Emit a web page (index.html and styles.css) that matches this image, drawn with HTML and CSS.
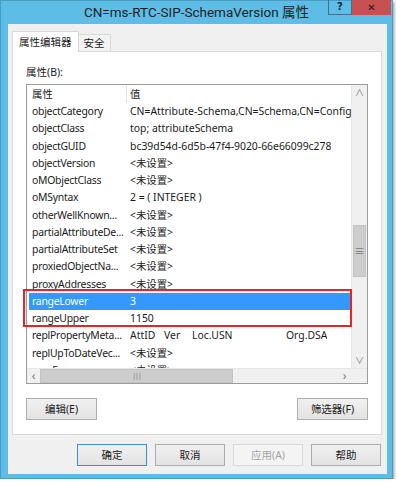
FILE: index.html
```html
<!DOCTYPE html>
<html>
<head>
<meta charset="utf-8">
<title>CN=ms-RTC-SIP-SchemaVersion 属性</title>
<link rel="stylesheet" href="styles.css">
</head>
<body>
<div class="window">
  <div class="titlebar">
    <span class="title">CN=ms-RTC-SIP-SchemaVersion 属性</span>
    <div class="capbtns"><span class="cap-help">?</span><span class="cap-close">&#x2715;</span></div>
  </div>

  <div class="client">
    <div class="tabs">
      <span class="tab active">属性编辑器</span><span class="tab">安全</span>
    </div>

    <div class="panel">
      <div class="label">属性(B):</div>

      <div class="listview">
        <div class="lv-main">
          <div class="lv-body">
            <div class="lv-head"><span class="c1">属性</span><span class="c2">值</span></div>
            <div class="row"><span class="c1">objectCategory</span><span class="c2">CN=Attribute-Schema,CN=Schema,CN=Configuration,DC=contoso,DC=com</span></div>
            <div class="row"><span class="c1">objectClass</span><span class="c2">top; attributeSchema</span></div>
            <div class="row"><span class="c1">objectGUID</span><span class="c2">bc39d54d-6d5b-47f4-9020-66e66099c278</span></div>
            <div class="row"><span class="c1">objectVersion</span><span class="c2">&lt;未设置&gt;</span></div>
            <div class="row"><span class="c1">oMObjectClass</span><span class="c2">&lt;未设置&gt;</span></div>
            <div class="row"><span class="c1">oMSyntax</span><span class="c2">2 = ( INTEGER )</span></div>
            <div class="row"><span class="c1">otherWellKnown...</span><span class="c2">&lt;未设置&gt;</span></div>
            <div class="row"><span class="c1">partialAttributeDe...</span><span class="c2">&lt;未设置&gt;</span></div>
            <div class="row"><span class="c1">partialAttributeSet</span><span class="c2">&lt;未设置&gt;</span></div>
            <div class="row"><span class="c1">proxiedObjectNa...</span><span class="c2">&lt;未设置&gt;</span></div>
            <div class="row"><span class="c1">proxyAddresses</span><span class="c2">&lt;未设置&gt;</span></div>
            <div class="row selected"><span class="c1">rangeLower</span><span class="c2">3</span></div>
            <div class="row"><span class="c1">rangeUpper</span><span class="c2">1150</span></div>
            <div class="row"><span class="c1">replPropertyMeta...</span><span class="c2"><span class="t1">AttID</span><span class="t2">Ver</span><span class="t3">Loc.USN</span><span>Org.DSA</span></span></div>
            <div class="row"><span class="c1">replUpToDateVec...</span><span class="c2">&lt;未设置&gt;</span></div>
            <div class="row"><span class="c1">repsFrom</span><span class="c2">&lt;未设置&gt;</span></div>
          </div>
          <div class="vscroll">
            <span class="arrow">&#x2227;</span>
            <div class="vtrack"><div class="vthumb">&#x2261;</div></div>
            <span class="arrow">&#x2228;</span>
          </div>
        </div>
        <div class="hscroll">
          <span class="arrow">&lsaquo;</span>
          <div class="htrack"><div class="hthumb">|||</div></div>
          <span class="arrow">&rsaquo;</span>
          <span class="corner"></span>
        </div>
        <div class="callout"></div>
      </div>

      <div class="panel-btns">
        <span class="btn">编辑(E)</span>
        <span class="btn">筛选器(F)</span>
      </div>
    </div>

    <div class="dialog-btns">
      <span class="btn default">确定</span>
      <span class="btn">取消</span>
      <span class="btn disabled">应用(A)</span>
      <span class="btn">帮助</span>
    </div>
  </div>
</div>
</body>
</html>
```

FILE: styles.css
```css
body { margin: 0; background: #fff; font-family: "Noto Sans", "Noto Sans CJK SC", sans-serif; font-size: 10.4px; color: #1a1a1a; }

.window { width: 393px; height: 479px; box-sizing: border-box; background: #5ebde6; border: 1px solid #4a9cc2; box-shadow: 1px 2px 3px rgba(0,0,0,0.45); display: flex; flex-direction: column; }

/* title bar */
.titlebar { height: 23px; display: flex; }
.title { flex: 1; padding-left: 64px; text-align: center; font-family: Roboto, "Noto Sans CJK SC", sans-serif; font-size: 13.5px; line-height: 23px; color: #1e1e1e; white-space: nowrap; }
.capbtns { display: flex; margin: -1px 1px 0 0; height: 15px; }
.cap-help { width: 24px; border: 1px solid #3c6f88; border-top: none; box-sizing: border-box; text-align: center; font: bold 10px/14px "DejaVu Sans", sans-serif; color: #14213a; }
.cap-close { width: 39px; background: #c75050; text-align: center; font: bold 10px/15px "DejaVu Sans", sans-serif; color: #1a1a1a; }

/* client area */
.client { flex: 1; margin: 0 5px 4px 7px; background: #f0f0f0; padding: 7px 5px 0 4px; display: flex; flex-direction: column; }

.tabs { display: flex; align-items: flex-end; height: 20px; }
.tab { height: 17px; padding: 0 5px; box-sizing: border-box; border: 1px solid #d9d9d9; border-left: none; border-bottom: none; background: #f3f3f3; line-height: 16px; font-size: 10.5px; }
.tab.active { height: 21px; margin-bottom: -1px; border-left: 1px solid #d9d9d9; background: #fff; line-height: 20px; padding: 0 6px; position: relative; }

.panel { height: 384px; box-sizing: border-box; border: 1px solid #d9d9d9; background: #fff; padding: 13px 13px 0 13px; }
.label { line-height: 14px; font-size: 10.5px; margin-bottom: 5px; }

/* list view */
.listview { height: 300px; box-sizing: border-box; border: 1px solid #9c9c9c; position: relative; display: flex; flex-direction: column; }
.lv-main { flex: 1; display: flex; overflow: hidden; }
.lv-body { flex: 1; overflow: hidden; }
.lv-head { height: 18px; display: flex; line-height: 18px; }
.lv-head .c1 { width: 94px; padding-left: 5px; border-right: 1px solid #e5e5e5; }
.lv-head .c2 { padding-left: 3px; }
.row { height: 17.25px; display: flex; line-height: 17px; margin-left: 2px; white-space: nowrap; }
.row .c1 { width: 95px; flex: none; padding-left: 3px; overflow: hidden; letter-spacing: -0.25px; }
.row .c2 { padding-left: 3px; overflow: hidden; }
.row.selected { background: #3399ff; color: #fff; }
.t1 { display: inline-block; width: 34px; }
.t2 { display: inline-block; width: 28px; }
.t3 { display: inline-block; width: 94px; }

.vscroll { width: 15px; background: #f0f0f0; border-left: 1px solid #e6e6e6; display: flex; flex-direction: column; }
.arrow { height: 15px; line-height: 15px; text-align: center; color: #777; font-size: 9px; }
.vtrack { flex: 1; padding-top: 125px; }
.vthumb { height: 52px; margin: 0 1px; background: #cdcdcd; border: 1px solid #c2c2c2; box-sizing: border-box; text-align: center; line-height: 50px; color: #777; font-size: 10px; }

.hscroll { height: 14px; display: flex; background: #f0f0f0; border-top: 1px solid #e6e6e6; }
.hscroll .arrow { width: 13px; height: 14px; line-height: 13px; font-size: 12px; }
.htrack { flex: 1; display: flex; }
.hthumb { width: 193px; background: #cdcdcd; border: 1px solid #c2c2c2; box-sizing: border-box; text-align: center; font-size: 7px; line-height: 12px; color: #777; letter-spacing: -1px; }
.corner { width: 16px; background: #f0f0f0; }

.callout { position: absolute; left: -4px; top: 204px; width: 329px; height: 38px; box-sizing: border-box; border: 2px solid #e5242b; }

/* buttons */
.btn { width: 71px; height: 22px; box-sizing: border-box; border: 1px solid #adadad; background: linear-gradient(#f0f0f0, #e3e3e3); text-align: center; line-height: 20px; font-size: 10.5px; }
.btn.default { border-color: #3c8fd6; }
.btn.disabled { background: #f4f4f4; border-color: #d9d9d9; color: #a3a3a3; }

.panel-btns { display: flex; justify-content: space-between; margin-top: 14px; }
.dialog-btns { display: flex; justify-content: flex-end; gap: 8px; margin: 9px 1px 0 0; }
.dialog-btns .btn { width: 70px; }
```
